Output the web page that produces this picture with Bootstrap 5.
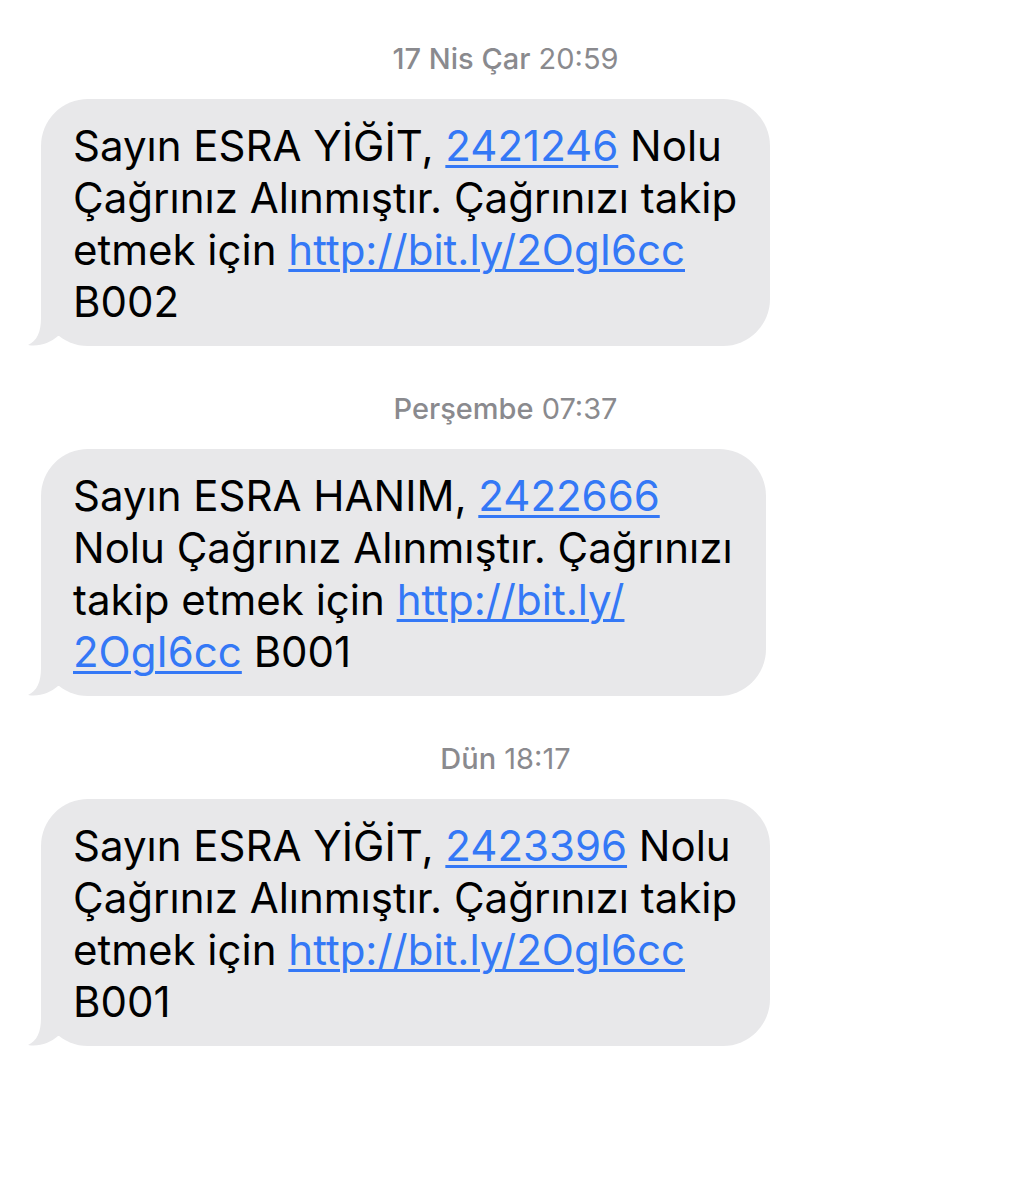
<!DOCTYPE html>
<html lang="tr">
<head>
<meta charset="utf-8">
<meta name="viewport" content="width=device-width, initial-scale=1">
<title>Mesajlar</title>
<link href="https://cdn.jsdelivr.net/npm/bootstrap@5.3.0/dist/css/bootstrap.min.css" rel="stylesheet">
<style>
body { font-family: Inter, "Liberation Sans", sans-serif; background: #fff; color: #000; }
.thread { padding: 39px 28px 0 41px; }
.stamp { font-size: 29px; line-height: 40px; color: #8a8a8e; margin-bottom: 20px; padding-right: 12px; }
.stamp-day { font-weight: 500; }
.bubble { background: #e8e8ea; border-radius: 47px; padding: 21px 33px 18px 32px; font-size: 42px; line-height: 52px; max-width: 100%; }
.bubble a { color: #3478f6; text-decoration: underline; text-decoration-thickness: 3px; text-underline-offset: 4px; }
.tail { position: absolute; left: -13px; bottom: 0; width: 64px; height: 52px; fill: #e8e8ea; }
.message { margin-bottom: 43px; }
</style>
<script src="https://cdn.jsdelivr.net/npm/bootstrap@5.3.0/dist/js/bootstrap.bundle.min.js"></script>
</head>
<body>
<main class="thread container-fluid">
  <section class="message">
    <div class="stamp text-center"><span class="stamp-day">17 Nis Çar</span> <time>20:59</time></div>
    <div class="d-flex">
      <div class="bubble position-relative">
        <svg class="tail" viewBox="0 0 64 52" aria-hidden="true"><path d="M13 0V24C13 38 9 47 0 51C11 53 22 49 30 42L50 42V0Z"/></svg>
        <p class="m-0 position-relative">Sayın ESRA YİĞİT, <a href="#">2421246</a> Nolu<br>Çağrınız Alınmıştır. Çağrınızı takip<br>etmek için <a href="#">http://bit.ly/2OgI6cc</a><br>B002</p>
      </div>
    </div>
  </section>
  <section class="message">
    <div class="stamp text-center"><span class="stamp-day">Perşembe</span> <time>07:37</time></div>
    <div class="d-flex">
      <div class="bubble position-relative">
        <svg class="tail" viewBox="0 0 64 52" aria-hidden="true"><path d="M13 0V24C13 38 9 47 0 51C11 53 22 49 30 42L50 42V0Z"/></svg>
        <p class="m-0 position-relative">Sayın ESRA HANIM, <a href="#">2422666</a><br>Nolu Çağrınız Alınmıştır. Çağrınızı<br>takip etmek için <a href="#">http://bit.ly/<br>2OgI6cc</a> B001</p>
      </div>
    </div>
  </section>
  <section class="message">
    <div class="stamp text-center"><span class="stamp-day">Dün</span> <time>18:17</time></div>
    <div class="d-flex">
      <div class="bubble position-relative">
        <svg class="tail" viewBox="0 0 64 52" aria-hidden="true"><path d="M13 0V24C13 38 9 47 0 51C11 53 22 49 30 42L50 42V0Z"/></svg>
        <p class="m-0 position-relative">Sayın ESRA YİĞİT, <a href="#">2423396</a> Nolu<br>Çağrınız Alınmıştır. Çağrınızı takip<br>etmek için <a href="#">http://bit.ly/2OgI6cc</a><br>B001</p>
      </div>
    </div>
  </section>
</main>
</body>
</html>
